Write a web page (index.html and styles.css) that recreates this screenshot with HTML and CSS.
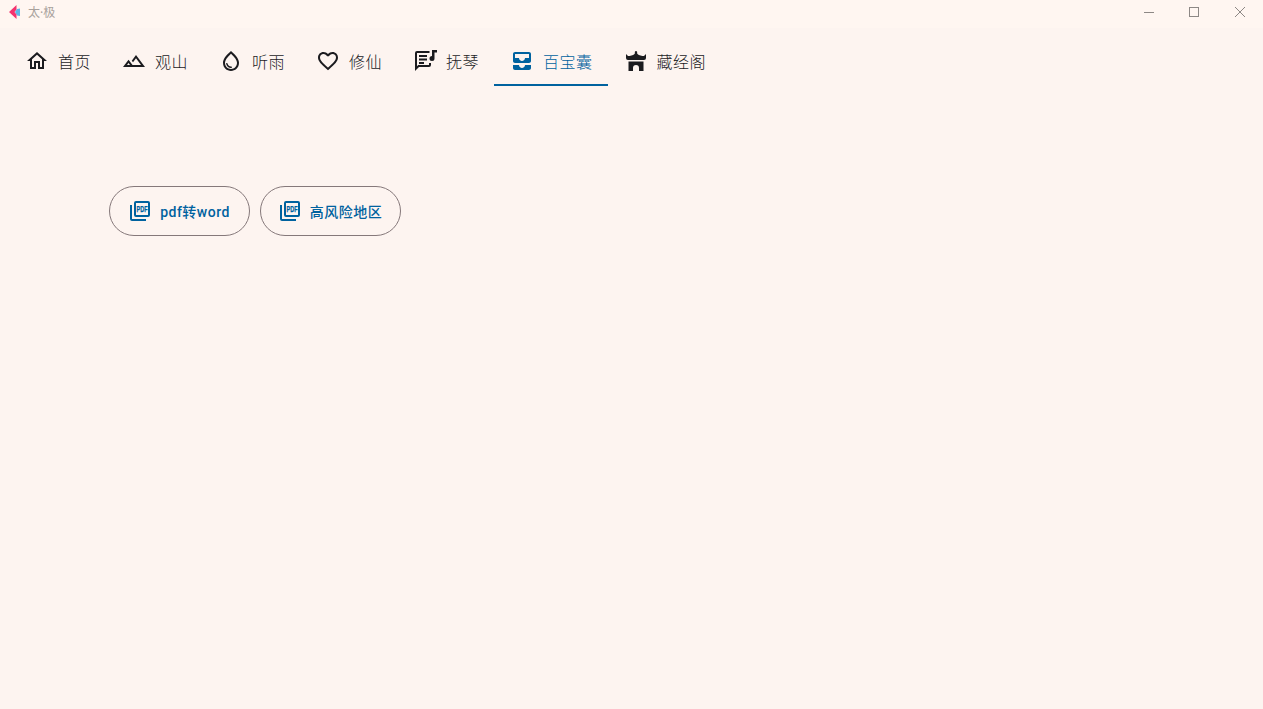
FILE: index.html
```html
<!DOCTYPE html>
<html lang="zh">
<head>
<meta charset="utf-8">
<title>太·极</title>
<link rel="stylesheet" href="styles.css">
</head>
<body>
<header class="titlebar">
  <div class="brand">
    <svg class="logo" viewBox="0 0 13 14"><path fill="#5fb6e6" d="M12 3.500V11L9 10.500 7 7 9 4Z"/><path fill="#f4336f" d="M1 7 8.500 0V4.500L6.500 7 8.500 9.500V14Z"/></svg>
    <span class="app-name">太·极</span>
  </div>
  <div class="window-controls">
    <svg class="win-icon" viewBox="0 0 10 10"><path d="M0 5.500H10"/></svg>
    <svg class="win-icon win-max" viewBox="0 0 10 10"><rect x="0.500" y="0.500" width="9" height="9"/></svg>
    <svg class="win-icon" viewBox="0 0 10 10"><path d="M0 0 10 10M10 0 0 10"/></svg>
  </div>
</header>
<nav class="tabs">
  <div class="tab"><svg class="tab-icon" viewBox="0 0 24 24"><path d="m12 5.690 5 4.500V18h-2v-6H9v6H7v-7.810l5-4.500M12 3 2 12h3v8h6v-6h2v6h6v-8h3L12 3z"/></svg><span>首页</span></div>
  <div class="tab"><svg class="tab-icon" viewBox="0 0 24 24"><path d="M14 6l-4.220 5.630 1.250 1.670L14 9.330 19 16h-8.460l-4.010-5.350L1 18h22L14 6zM5 16l1.520-2.030L8.040 16H5z"/></svg><span>观山</span></div>
  <div class="tab"><svg class="tab-icon" viewBox="0 0 24 24"><path d="M12 2c-5.330 4.550-8 8.480-8 11.800 0 4.980 3.800 8.200 8 8.200s8-3.220 8-8.200c0-3.320-2.670-7.250-8-11.800zm0 18c-3.350 0-6-2.570-6-6.200 0-2.340 1.950-5.440 6-9.140 4.050 3.700 6 6.790 6 9.140 0 3.630-2.650 6.200-6 6.200zm-4.170-6c.37 0 .67.260.74.620.41 2.220 2.280 2.980 3.640 2.870.43-.02.79.320.79.750 0 .40-.32.730-.72.750-2.130.13-4.620-1.090-5.190-4.120-.08-.45.280-.87.740-.87z"/></svg><span>听雨</span></div>
  <div class="tab"><svg class="tab-icon" viewBox="0 0 24 24"><path d="M16.500 3c-1.740 0-3.410.81-4.500 2.090C10.910 3.810 9.240 3 7.500 3 4.420 3 2 5.420 2 8.500c0 3.780 3.400 6.860 8.550 11.540L12 21.350l1.450-1.320C18.600 15.360 22 12.280 22 8.500 22 5.420 19.580 3 16.500 3zm-4.400 15.550-.1.100-.1-.1C7.140 14.240 4 11.390 4 8.500 4 6.500 5.500 5 7.500 5c1.540 0 3.040.99 3.570 2.360h1.870C13.460 5.990 14.960 5 16.500 5c2 0 3.500 1.500 3.500 3.500 0 2.890-3.140 5.740-7.900 10.050z"/></svg><span>修仙</span></div>
  <div class="tab"><svg class="tab-icon" viewBox="0 0 24 24"><path d="M4 2h12.500v2H4v13.200L5.200 16H16v-2h2v2a2 2 0 0 1-2 2H6l-4 4V4a2 2 0 0 1 2-2z"/><path d="M6 6h8v2H6zM6 9.500h8v2H6zM6 13h5v2H6z"/><path d="M19 1h5v2.500h-2.500V9.500a2.500 2.500 0 1 1-2.500-2.500z"/></svg><span>抚琴</span></div>
  <div class="tab active"><svg class="tab-icon" viewBox="0 0 24 24"><path d="M19 3H5c-1.100 0-1.990.9-1.990 2L3 12c0 1.100.9 2 2 2h14c1.100 0 2-.9 2-2V5c0-1.100-.9-2-2-2zm0 6h-4c0 1.620-1.380 3-3 3s-3-1.380-3-3H5V5h14v4zm-4 7h6v3c0 1.100-.9 2-2 2H5c-1.100 0-2-.9-2-2v-3h6c0 1.660 1.340 3 3 3s3-1.340 3-3z"/></svg><span>百宝囊</span></div>
  <div class="tab"><svg class="tab-icon" viewBox="0 0 24 24"><path d="M12 2a1.200 1.200 0 0 1 1 1.900l.5 1.100C15 6.500 18 7 20 7l2-2v4a2 2 0 0 1-2 2H4a2 2 0 0 1-2-2V5l2 2c2 0 5-.5 6.500-2l.5-1.100A1.200 1.200 0 0 1 12 2zM4.500 12.500h15V22H15v-3a3 3 0 0 0-6 0v3H4.500z"/></svg><span>藏经阁</span></div>
</nav>
<main class="content">
  <button class="tool"><svg class="tool-icon" viewBox="0 0 24 24"><path d="M8 2h12a2 2 0 0 1 2 2v12a2 2 0 0 1-2 2H8a2 2 0 0 1-2-2V4a2 2 0 0 1 2-2zm0 2v12h12V4zM2 6h2v14h14v2H4a2 2 0 0 1-2-2z"/><text class="pdf-label" x="8.500" y="13.200" textLength="11" lengthAdjust="spacingAndGlyphs">PDF</text></svg><span>pdf转word</span></button>
  <button class="tool"><svg class="tool-icon" viewBox="0 0 24 24"><path d="M8 2h12a2 2 0 0 1 2 2v12a2 2 0 0 1-2 2H8a2 2 0 0 1-2-2V4a2 2 0 0 1 2-2zm0 2v12h12V4zM2 6h2v14h14v2H4a2 2 0 0 1-2-2z"/><text class="pdf-label" x="8.500" y="13.200" textLength="11" lengthAdjust="spacingAndGlyphs">PDF</text></svg><span>高风险地区</span></button>
</main>
</body>
</html>
```
FILE: styles.css
```css
* { box-sizing: border-box; }
html, body { height: 100%; }
body {
  margin: 0;
  background: #fdf4f0;
  font-family: "Noto Sans CJK SC", "Noto Sans", sans-serif;
  color: #1b1b1f;
  overflow: hidden;
}
.titlebar {
  height: 28px;
  background: #fff6f1;
  display: flex;
  justify-content: space-between;
  align-items: center;
}
.brand { display: flex; align-items: center; padding-left: 8px; padding-bottom: 4px; gap: 7px; }
.logo { width: 13px; height: 14px; }
.app-name { font-family: "Noto Sans", "Noto Sans CJK SC", sans-serif; font-size: 12px; color: #a8a19c; }
.window-controls { display: flex; gap: 35px; padding-right: 18px; padding-bottom: 4px; }
.win-icon { width: 10px; height: 10px; fill: none; stroke: #8d8885; stroke-width: 1; }
.win-max { margin-right: 1px; }
.tabs { display: flex; height: 58px; padding-left: 9px; }
.tab {
  display: flex;
  align-items: center;
  gap: 9px;
  padding: 10px 15px 0 16px;
  font-size: 16px;
  font-weight: 300;
  border-bottom: 2px solid transparent;
  letter-spacing: 0.5px;
}
.tab.active { color: #00629f; border-bottom-color: #00629f; }
.tab-icon { width: 24px; height: 24px; fill: currentColor; flex: none; }
.content { display: flex; gap: 10px; padding: 100px 0 0 109px; }
.tool {
  width: 141px;
  height: 50px;
  border: 1px solid #85787a;
  border-radius: 25px;
  background: transparent;
  color: #00629f;
  font: 500 14px Roboto, "Noto Sans CJK SC", sans-serif;
  letter-spacing: 0.5px;
  display: flex;
  align-items: center;
  justify-content: center;
  gap: 8px;
  padding: 0 1px 0 0;
}
.tool-icon { width: 24px; height: 24px; fill: #00629f; flex: none; }
.pdf-label { font: 700 8.500px "Liberation Sans Narrow", "Liberation Sans", sans-serif; letter-spacing: 0; stroke: #00629f; stroke-width: 0.25px; }
```
